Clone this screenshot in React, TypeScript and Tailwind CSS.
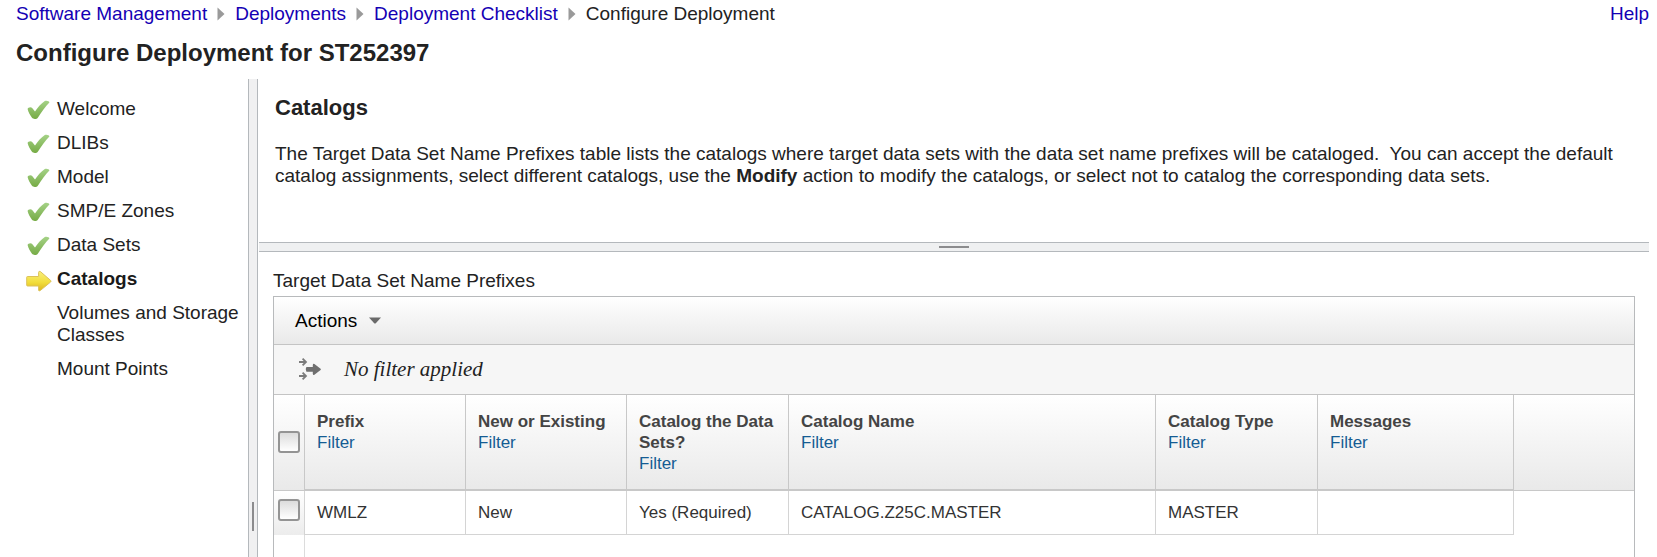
import React from "react";

const crumbs = ["Software Management", "Deployments", "Deployment Checklist"];

type StepState = "done" | "current" | "todo";

const steps: { label: string; state: StepState }[] = [
  { label: "Welcome", state: "done" },
  { label: "DLIBs", state: "done" },
  { label: "Model", state: "done" },
  { label: "SMP/E Zones", state: "done" },
  { label: "Data Sets", state: "done" },
  { label: "Catalogs", state: "current" },
  { label: "Volumes and Storage Classes", state: "todo" },
  { label: "Mount Points", state: "todo" },
];

const columns = [
  "Prefix",
  "New or Existing",
  "Catalog the Data Sets?",
  "Catalog Name",
  "Catalog Type",
  "Messages",
];

const rows = [["WMLZ", "New", "Yes (Required)", "CATALOG.Z25C.MASTER", "MASTER", ""]];

function CheckIcon() {
  return (
    <svg width="26" height="22" viewBox="0 0 26 22" className="block" aria-hidden="true">
      <defs>
        <linearGradient id="tick" x1="0" y1="0" x2="0" y2="1">
          <stop offset="0" stopColor="#a5d287" />
          <stop offset="1" stopColor="#76ab45" />
        </linearGradient>
      </defs>
      <path
        d="M1.6 9 C1.8 7.4 5 6.4 6.4 8.2 L9 11.6 C11.4 8 15 3.4 18.8 1 C20.4 0.2 23.4 1 23.4 2.4 C19.4 6.6 15.4 11.8 12 17.4 C10.8 19.4 7.2 19.4 6 17.8 C4.2 15.2 2.4 12.4 1.6 9 Z"
        fill="url(#tick)"
      />
    </svg>
  );
}

function CurrentIcon() {
  return (
    <svg width="26" height="22" viewBox="0 0 26 22" className="block" aria-hidden="true">
      <defs>
        <linearGradient id="arrow" x1="0" y1="0" x2="0" y2="1">
          <stop offset="0" stopColor="#f8ee7c" />
          <stop offset="0.55" stopColor="#f2de3c" />
          <stop offset="1" stopColor="#dcb51c" />
        </linearGradient>
      </defs>
      <path
        d="M1.5 6.5 Q0.7 6.5 0.7 7.3 V15.2 Q0.7 16 1.5 16 H12.6 V20 Q12.8 21.6 14.2 20.6 L24.6 12 Q25.4 11.2 24.6 10.4 L14.4 1.6 Q12.8 0.6 12.6 2.4 V6.5 Z"
        fill="url(#arrow)"
        stroke="#dcc25a"
        strokeWidth="1"
      />
    </svg>
  );
}

function FilterIcon() {
  return (
    <svg width="24" height="24" viewBox="0 0 24 24" className="block" aria-hidden="true">
      <g fill="none" stroke="#7b7b7b" strokeWidth="1.8">
        <path d="M1 5 H8 M4.6 1.6 L8 5 L4.6 8.4" />
        <path d="M1 19 H8 M4.6 15.6 L8 19 L4.6 22.4" />
      </g>
      <path
        d="M8.4 10 Q6.8 12.4 8.4 14.8 H14.8 V16.8 Q15 18.6 16.4 17.8 L22.6 13 Q23.2 12.4 22.6 11.8 L16.4 7 Q15 6.2 14.8 8 V10 Z"
        fill="#6f6f6f"
      />
    </svg>
  );
}

function Tick({ label }: { label: string }) {
  return (
    <input
      type="checkbox"
      aria-label={label}
      className="block size-[22px] appearance-none rounded-[3px] border-2 border-[#949494] bg-linear-to-b from-[#dcdcdc] to-white"
    />
  );
}

export default function App() {
  return (
    <div className="flex min-h-screen flex-col bg-white pr-2 font-['Liberation_Sans',Arial,sans-serif] text-[19px] leading-[22px] text-[#222]">
      <header>
        <div className="flex items-center justify-between pt-[3px] pl-4">
          <nav aria-label="Breadcrumb">
            <ol className="flex items-center">
              {crumbs.map((c) => (
                <li key={c} className="flex items-center">
                  <a href="#" className="text-[#1400b4]">
                    {c}
                  </a>
                  <svg width="8" height="14" viewBox="0 0 8 14" className="mx-[10px]" aria-hidden="true">
                    <path d="M0.5 0.5 L7.5 7 L0.5 13.5 Z" fill="#9a9a9a" />
                  </svg>
                </li>
              ))}
              <li aria-current="page">Configure Deployment</li>
            </ol>
          </nav>
          <a href="#" className="text-[#1400b4]">
            Help
          </a>
        </div>
        <h1 className="pt-[14px] pb-3 pl-4 text-2xl leading-[28px] font-bold">
          Configure Deployment for ST252397
        </h1>
      </header>

      <div className="flex flex-1">
        <aside className="w-[248px] shrink-0 pt-[19px]">
          <ol className="flex flex-col gap-3">
            {steps.map((s) => (
              <li key={s.label} className="flex items-start pl-[26px]">
                <span className="h-[22px] w-[31px] shrink-0 pt-[2px]">
                  {s.state === "done" && <CheckIcon />}
                  {s.state === "current" && <CurrentIcon />}
                </span>
                <a href="#" className={s.state === "current" ? "font-bold text-[#1a1a1a]" : ""}>
                  {s.label}
                </a>
              </li>
            ))}
          </ol>
        </aside>

        <div
          role="separator"
          aria-orientation="vertical"
          className="flex w-[10px] shrink-0 items-end justify-center border-x border-[#b4b8bc] bg-[#f0f0f1] pb-[26px]"
        >
          <span className="h-[29px] w-[2px] bg-[#8c8c8e]" />
        </div>

        <main className="ml-px flex min-w-0 flex-1 flex-col">
          <section className="px-4 pt-[17px] pb-[55px]">
            <h2 className="text-[22px] leading-6 font-bold">Catalogs</h2>
            <p className="mt-[23px]">
              The Target Data Set Name Prefixes table lists the catalogs where target data sets with
              the data set name prefixes will be cataloged.&nbsp; You can accept the default catalog
              assignments, select different catalogs, use the <b>Modify</b> action to modify the
              catalogs, or select not to catalog the corresponding data sets.
            </p>
          </section>

          <div
            role="separator"
            aria-orientation="horizontal"
            className="flex h-[10px] items-center justify-center border-y border-[#b4b8bc] bg-[#eff0f1]"
          >
            <span className="h-[2px] w-[30px] bg-[#8c8c8e]" />
          </div>

          <section className="flex flex-1 flex-col pt-[18px] pr-[14px] pl-[14px]">
            <h3 id="grid-title" className="pb-1">
              Target Data Set Name Prefixes
            </h3>
            <div className="flex flex-1 flex-col border border-b-0 border-[#b8babc]">
              <div className="flex h-12 items-center border-b border-[#c4c4c4] bg-linear-to-b from-white to-[#e9e9e9] pl-[21px]">
                <button type="button" className="flex items-center gap-3 text-black">
                  Actions
                  <svg width="12" height="7" viewBox="0 0 12 7" aria-hidden="true">
                    <path d="M0 0.5 H12 L6.8 6.2 Q6 7 5.2 6.2 Z" fill="#6a6a6a" />
                  </svg>
                </button>
              </div>
              <div className="flex h-[50px] items-center gap-[22px] border-b border-[#c4c4c4] bg-[#f6f6f6] pb-[2px] pl-6">
                <FilterIcon />
                <span className="font-[Georgia,'Liberation_Serif',serif] text-[21px] italic">
                  No filter applied
                </span>
              </div>

              <table
                aria-labelledby="grid-title"
                className="w-full table-fixed border-separate border-spacing-0 text-left text-[17px] leading-[21px]"
              >
                <colgroup>
                  <col className="w-[31px]" />
                  <col className="w-[161px]" />
                  <col className="w-[161px]" />
                  <col className="w-[162px]" />
                  <col className="w-[367px]" />
                  <col className="w-[162px]" />
                  <col className="w-[196px]" />
                  <col />
                </colgroup>
                <thead>
                  <tr className="h-24 bg-linear-to-b from-white to-[#e9e9e9]">
                    <th className="border-r border-b border-[#c8c8c8] pb-[2px] pl-1 align-middle">
                      <Tick label="Select all rows" />
                    </th>
                    {columns.map((c) => (
                      <th
                        key={c}
                        className="border-r border-b-2 border-[#c8c8c8] pt-4 pl-3 align-top font-bold text-[#444]"
                      >
                        {c}
                        <a href="#" className="block font-normal text-[#155c93]">
                          Filter
                        </a>
                      </th>
                    ))}
                    <td className="border-b border-[#c8c8c8]" />
                  </tr>
                </thead>
                <tbody>
                  {rows.map((r) => (
                    <tr key={r[0]} className="h-11">
                      <td className="border-r border-[#d4d4d4] bg-linear-to-b from-white to-[#ececec] pb-[6px] pl-1 align-middle">
                        <Tick label={`Select ${r[0]}`} />
                      </td>
                      {r.map((v, i) => (
                        <td
                          key={i}
                          className="border-r border-b border-[#d4d4d4] pl-3 align-middle text-[#333]"
                        >
                          {v}
                        </td>
                      ))}
                      <td />
                    </tr>
                  ))}
                </tbody>
              </table>
              <div className="w-[31px] flex-1 border-r border-[#dcdcdc]" />
            </div>
          </section>
        </main>
      </div>
    </div>
  );
}
